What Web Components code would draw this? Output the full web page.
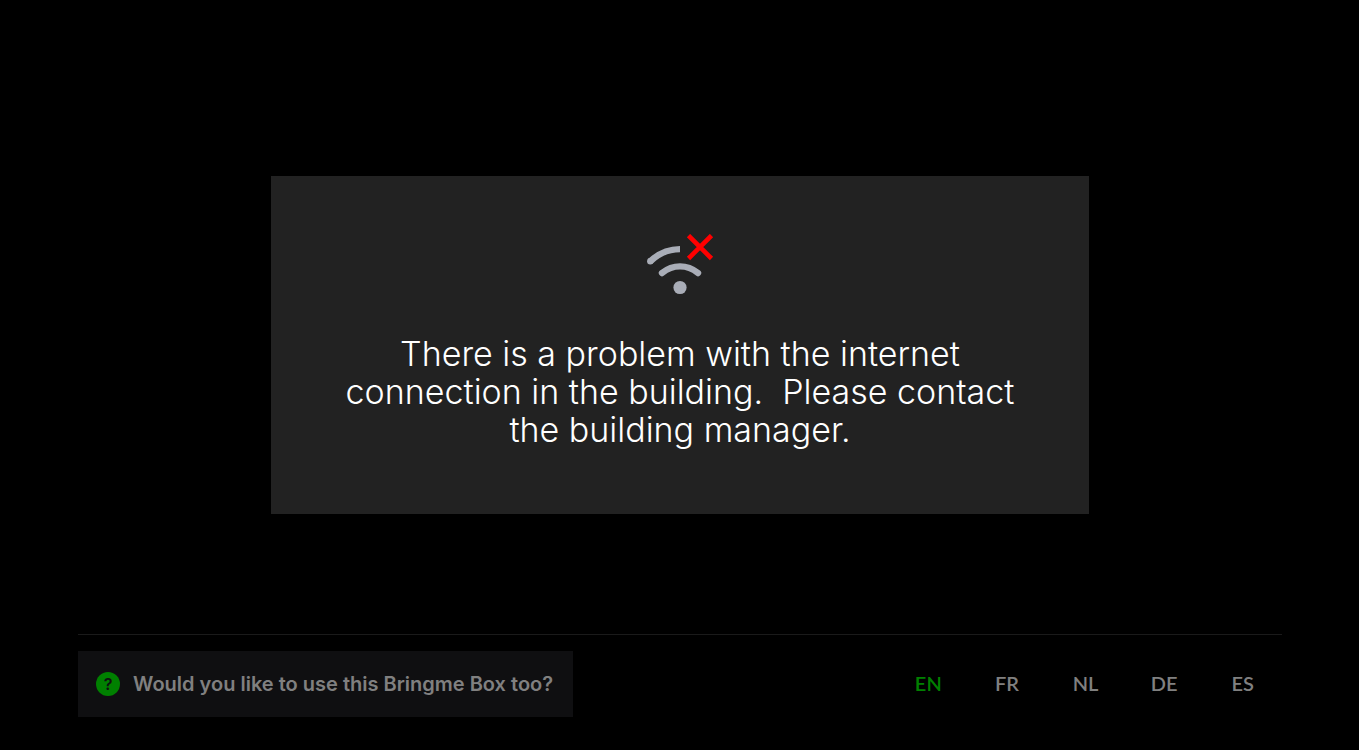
<!DOCTYPE html>
<html lang="en">
<head>
  <meta charset="utf-8">
  <meta name="viewport" content="width=device-width, initial-scale=1">
  <title>Bringme Box</title>
  <style>
    body {
      margin: 0;
      background-color: #000;
      color: #fff;
      font-family: Inter, "Liberation Sans", sans-serif;
    }
  </style>
</head>
<body>
  <kiosk-screen>
    <message-card>
      <no-connection-icon slot="icon"></no-connection-icon>
      There is a problem with the internet connection in the building.&nbsp; Please contact the building manager.
    </message-card>
    <help-button slot="footer">Would you like to use this Bringme Box too?</help-button>
    <language-picker slot="footer" languages="EN,FR,NL,DE,ES" selected="EN"></language-picker>
  </kiosk-screen>

  <script>
    class KioskScreen extends HTMLElement {
      constructor() {
        super();
        this.attachShadow({ mode: 'open' });
        this.shadowRoot.innerHTML = `
          <style>
            :host {
              display: flex;
              flex-direction: column;
              box-sizing: border-box;
              min-height: 100vh;
              padding: 56px 77px 33px 78px;
            }

            main {
              flex: 1;
              display: flex;
              align-items: center;
              justify-content: center;
            }

            footer {
              display: flex;
              flex-wrap: wrap;
              align-items: center;
              justify-content: space-between;
              padding-top: 16px;
              border-top: 1px solid #1a1a1a;
            }
          </style>
          <main><slot></slot></main>
          <footer><slot name="footer"></slot></footer>
        `;
      }
    }
    customElements.define('kiosk-screen', KioskScreen);

    class MessageCard extends HTMLElement {
      constructor() {
        super();
        this.attachShadow({ mode: 'open' });
        this.shadowRoot.innerHTML = `
          <style>
            :host {
              display: block;
              box-sizing: border-box;
              width: 68%;
              padding: 58px 64px 65px;
              background-color: #222;
              text-align: center;
            }

            p {
              margin: 39px 0 0;
              font-size: 34px;
              font-weight: 300;
              line-height: 38px;
            }
          </style>
          <slot name="icon"></slot>
          <p role="alert"><slot></slot></p>
        `;
      }
    }
    customElements.define('message-card', MessageCard);

    class NoConnectionIcon extends HTMLElement {
      constructor() {
        super();
        this.attachShadow({ mode: 'open' });
        this.shadowRoot.innerHTML = `
          <style>
            :host {
              display: block;
            }

            svg {
              display: block;
              margin: 0 auto;
            }
          </style>
          <svg width="68" height="62" viewBox="0 0 68 62" fill="none" aria-hidden="true">
            <g stroke="#a9adb7" stroke-width="6.4">
              <path d="M4.2 27.4C12.5 19.5 22.5 15.1 34 15.1"/>
              <path d="M16 39C27 30.2 41 30.2 52 39" stroke-linecap="round"/>
            </g>
            <circle cx="4.3" cy="27.3" r="3.2" fill="#a9adb7"/>
            <circle cx="34" cy="53.5" r="6.6" fill="#a9adb7"/>
            <path d="M42.5 1.5L65.5 24.5M65.5 1.5L42.5 24.5" stroke="#f00" stroke-width="4.6"/>
          </svg>
        `;
      }
    }
    customElements.define('no-connection-icon', NoConnectionIcon);

    class HelpButton extends HTMLElement {
      constructor() {
        super();
        this.attachShadow({ mode: 'open' });
        this.shadowRoot.innerHTML = `
          <style>
            :host {
              display: block;
            }

            button {
              display: flex;
              align-items: center;
              gap: 13px;
              height: 66px;
              padding: 0 20px 0 18px;
              border: none;
              background-color: #0f0f11;
              color: #808080;
              font: 600 20px/24px Inter, "Liberation Sans", sans-serif;
              cursor: pointer;
            }

            .mark {
              width: 24px;
              height: 24px;
              border-radius: 50%;
              background-color: #008000;
              color: #0f0f11;
              font-size: 16px;
              text-align: center;
            }
          </style>
          <button type="button">
            <span class="mark">?</span>
            <span><slot></slot></span>
          </button>
        `;
      }
    }
    customElements.define('help-button', HelpButton);

    class LanguagePicker extends HTMLElement {
      constructor() {
        super();
        this.attachShadow({ mode: 'open' });
      }

      connectedCallback() {
        this.render();
        this.addEventListeners();
      }

      render() {
        const selected = this.getAttribute('selected');
        const buttons = this.getAttribute('languages').split(',').map(code =>
          `<button type="button" aria-pressed="${code === selected}">${code}</button>`
        ).join('');

        this.shadowRoot.innerHTML = `
          <style>
            :host {
              display: grid;
              grid-template-columns: repeat(5, 1fr);
              width: 393px;
            }

            button {
              height: 66px;
              padding: 0 0 2px;
              border: none;
              background: none;
              color: #808080;
              font: 600 20px/24px Lato, "Liberation Sans", sans-serif;
              cursor: pointer;
            }

            button[aria-pressed="true"] {
              color: #008000;
            }
          </style>
          ${buttons}
        `;
      }

      addEventListeners() {
        const buttons = this.shadowRoot.querySelectorAll('button');
        buttons.forEach(button => {
          button.addEventListener('click', () => {
            buttons.forEach(other => other.setAttribute('aria-pressed', other === button));
            this.dispatchEvent(new CustomEvent('language-change', {
              bubbles: true,
              composed: true,
              detail: { language: button.textContent }
            }));
          });
        });
      }
    }
    customElements.define('language-picker', LanguagePicker);
  </script>
</body>
</html>
